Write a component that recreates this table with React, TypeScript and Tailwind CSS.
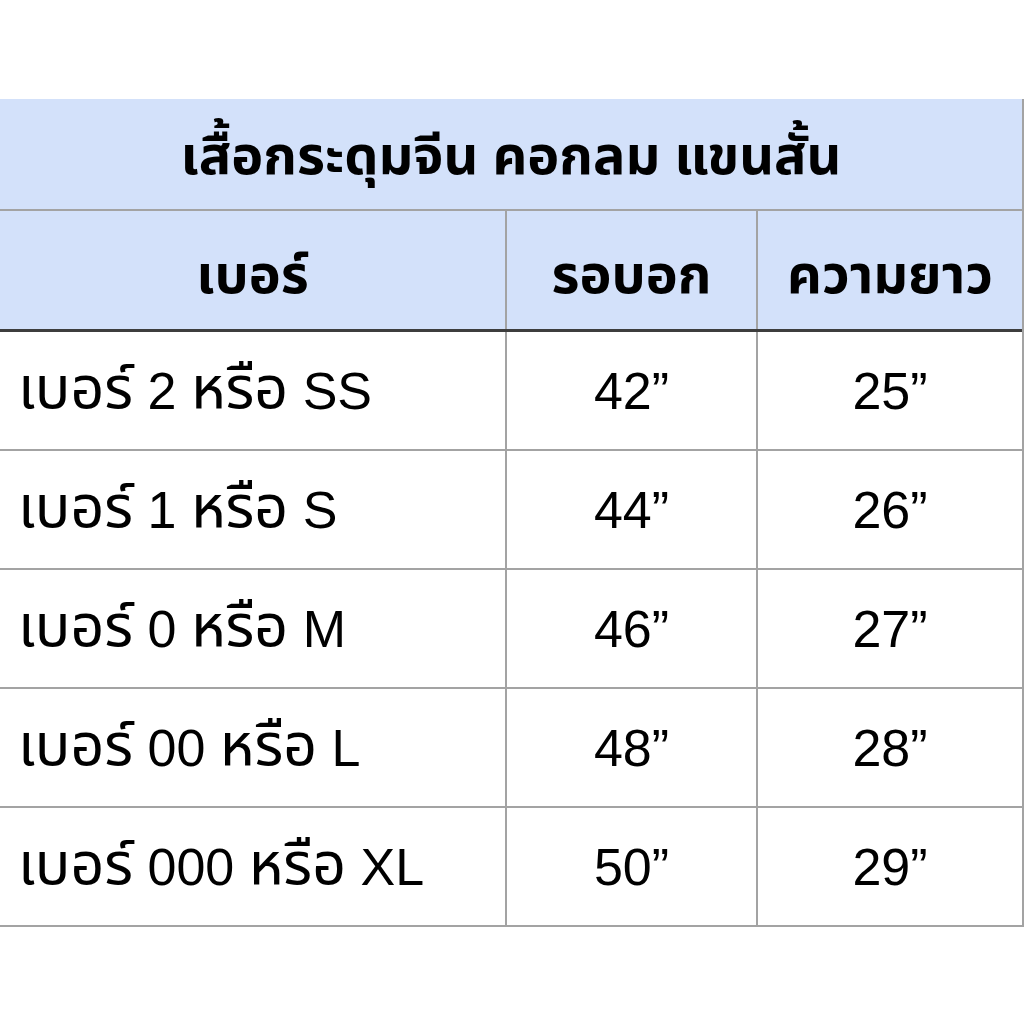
const rows = [
  ["2", "SS", "42”", "25”"],
  ["1", "S", "44”", "26”"],
  ["0", "M", "46”", "27”"],
  ["00", "L", "48”", "28”"],
  ["000", "XL", "50”", "29”"],
];

const thai = { fontFamily: '"Noto Sans Thai", "Noto Sans", "Liberation Sans", sans-serif' };
const body = { fontFamily: '"Liberation Sans", "Noto Sans Thai", "Noto Sans", sans-serif' };

export default function App() {
  return (
    <div className="w-[1024px] h-[1024px] bg-white pt-[99px] text-black">
      <div className="w-[1024px] border-r-2 border-[#a3a3a3]">
        <div
          className="h-[112px] bg-[#d3e1fa] border-b-2 border-[#a3a3a3] flex items-center justify-center text-[54px] font-bold leading-none pt-[8px]"
          style={thai}
        >
          เสื้อกระดุมจีน คอกลม แขนสั้น
        </div>
        <div
          className="grid grid-cols-[507px_251px_1fr] h-[121px] bg-[#d3e1fa] border-b-[3px] border-[#3d3d3d] text-[54px] font-bold leading-none"
          style={thai}
        >
          <div className="flex items-center justify-center pt-[14px] border-r-2 border-[#a3a3a3]">เบอร์</div>
          <div className="flex items-center justify-center pt-[14px] border-r-2 border-[#a3a3a3]">รอบอก</div>
          <div className="flex items-center justify-center pt-[14px]">ความยาว</div>
        </div>
        {rows.map((r) => (
          <div
            key={r[0]}
            className="grid grid-cols-[507px_251px_1fr] h-[119px] border-b-2 border-[#a3a3a3] text-[52px] leading-none"
            style={body}
          >
            <div className="flex items-center pl-[18px] border-r-2 border-[#a3a3a3] whitespace-pre">
              <span className="text-[59px]" style={thai}>เบอร์</span>
              <span> {r[0]} </span>
              <span className="text-[59px]" style={thai}>หรือ</span>
              <span> {r[1]}</span>
            </div>
            <div className="flex items-center justify-center border-r-2 border-[#a3a3a3]">{r[2]}</div>
            <div className="flex items-center justify-center">{r[3]}</div>
          </div>
        ))}
      </div>
    </div>
  );
}
